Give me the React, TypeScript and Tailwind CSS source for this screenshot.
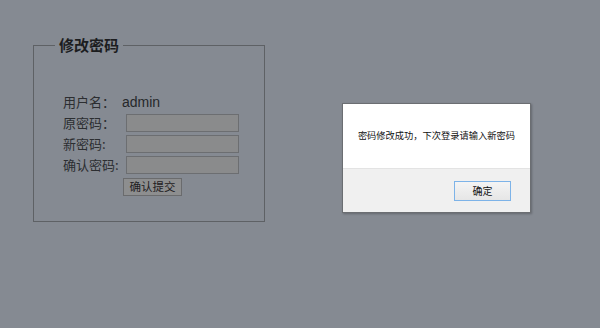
const cjk = "font-['Microsoft_YaHei','Noto_Sans_CJK_SC',sans-serif]";

const Field = ({ label }: { label: string }) => (
  <div className="flex h-[20px] items-center">
    <span className="w-[63px] whitespace-nowrap">{label}</span>
    <div className="h-[18px] w-[113px] border border-[#6c6e71] bg-[#8a8b8c]" />
  </div>
);

export default function App() {
  return (
    <div className={`relative h-[328px] w-[600px] overflow-hidden bg-[#858a92] ${cjk}`}>
      <div className="pl-[33px] pt-[35px]">
        <fieldset className="h-[187px] w-[232px] border border-[#5e6165]">
          <legend className="ml-[21px] px-[4px] text-[15px] font-bold leading-[20px] text-[#1c1d1f]">
            修改密码
          </legend>
          <div className="mt-[37px] pl-[29px] text-[13px] text-[#2c2e31]">
            <div className="flex h-[20px] items-center">
              <span className="w-[59px] whitespace-nowrap">用户名：</span>
              <span className="font-['Liberation_Sans',sans-serif] text-[14px] text-[#26282b]">admin</span>
            </div>
            <div className="mt-[1px] flex flex-col gap-[1px]">
              <Field label="原密码：" />
              <Field label="新密码:" />
              <Field label="确认密码:" />
            </div>
            <div className="mt-[1px] pl-[60px]">
              <button className="h-[18px] w-[59px] border border-[#6a6b6d] bg-[#8d8e8f] text-[11.5px] leading-none text-[#1f2022]">
                确认提交
              </button>
            </div>
          </div>
        </fieldset>
      </div>

      <div className="absolute left-[342px] top-[103px] w-[189px] border border-[#6b6e72] bg-white shadow-[1px_1px_2px_rgba(0,0,0,0.25)]">
        <div className="flex h-[64px] items-center justify-center text-[9.25px] text-[#111]">
          密码修改成功，下次登录请输入新密码
        </div>
        <div className="flex h-[44px] items-center justify-end border-t border-[#e3e3e3] bg-[#f0f0f0] pr-[19px]">
          <button className="h-[20px] w-[57px] border border-[#7db3e8] bg-gradient-to-b from-[#f4f4f4] to-[#e6e6e6] text-[10px] leading-none text-[#111]">
            确定
          </button>
        </div>
      </div>
    </div>
  );
}
